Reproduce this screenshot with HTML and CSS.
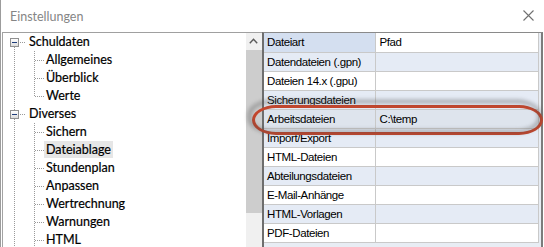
FILE: index.html
```html
<!DOCTYPE html>
<html lang="de">
<head>
<meta charset="utf-8">
<title>Einstellungen</title>
<link rel="stylesheet" href="styles.css">
</head>
<body>
<div class="window">
  <div class="titlebar">
    <span class="title">Einstellungen</span>
    <svg class="close" width="11" height="11" viewBox="0 0 11 11"><path d="M0.5 0.5 L10.5 10.5 M10.5 0.5 L0.5 10.5" stroke="#707070" stroke-width="1.1" fill="none"/></svg>
  </div>
  <div class="content">
    <div class="treepanel">
      <ul class="tree">
        <li class="node">
          <div class="node-row"><span class="toggle"></span><span class="hdots"></span><span class="label">Schuldaten</span></div>
          <ul class="children">
            <li class="leaf"><span class="label">Allgemeines</span></li>
            <li class="leaf"><span class="label">Überblick</span></li>
            <li class="leaf"><span class="label">Werte</span></li>
          </ul>
        </li>
        <li class="node">
          <div class="node-row"><span class="toggle"></span><span class="hdots"></span><span class="label">Diverses</span></div>
          <ul class="children open">
            <li class="leaf"><span class="label">Sichern</span></li>
            <li class="leaf"><span class="label selected">Dateiablage</span></li>
            <li class="leaf"><span class="label">Stundenplan</span></li>
            <li class="leaf"><span class="label">Anpassen</span></li>
            <li class="leaf"><span class="label">Wertrechnung</span></li>
            <li class="leaf"><span class="label">Warnungen</span></li>
            <li class="leaf"><span class="label">HTML</span></li>
          </ul>
        </li>
      </ul>
      <div class="scrollbar">
        <div class="sb-btn"><svg width="9" height="6" viewBox="0 0 9 6"><path d="M0.8 5.2 L4.5 1.3 L8.2 5.2" stroke="#5a5a5a" stroke-width="1.4" fill="none"/></svg></div>
        <div class="sb-thumb"></div>
        <div class="sb-track"></div>
      </div>
    </div>
    <div class="gridpanel">
      <table class="grid">
        <tr class="head"><td class="c1">Dateiart</td><td class="c2">Pfad</td></tr>
        <tr class="alt"><td class="c1">Datendateien (.gpn)</td><td class="c2"></td></tr>
        <tr><td class="c1">Dateien 14.x (.gpu)</td><td class="c2"></td></tr>
        <tr class="alt"><td class="c1">Sicherungsdateien</td><td class="c2"></td></tr>
        <tr class="hl"><td class="c1">Arbeitsdateien</td><td class="c2">C:\temp</td></tr>
        <tr class="alt"><td class="c1">Import/Export</td><td class="c2"></td></tr>
        <tr><td class="c1">HTML-Dateien</td><td class="c2"></td></tr>
        <tr class="alt"><td class="c1">Abteilungsdateien</td><td class="c2"></td></tr>
        <tr><td class="c1">E-Mail-Anhänge</td><td class="c2"></td></tr>
        <tr class="alt"><td class="c1">HTML-Vorlagen</td><td class="c2"></td></tr>
        <tr><td class="c1">PDF-Dateien</td><td class="c2"></td></tr>
      </table>
    </div>
  </div>
  <div class="mark"></div>
</div>
</body>
</html>
```
FILE: styles.css
```css
* { box-sizing: border-box; }
html, body { margin: 0; padding: 0; background: #ffffff; overflow: hidden; }
ul { list-style: none; margin: 0; padding: 0; }

.window {
  position: relative;
  width: 544px;
  height: 247px;
  border-left: 1px solid #9c9c9c;
  background: #ffffff;
  overflow: hidden;
}

.titlebar {
  height: 32px;
  display: flex;
  justify-content: space-between;
  align-items: flex-start;
  padding: 8px 10px 0 9px;
}
.title {
  font-family: Lato, "Open Sans", sans-serif;
  font-size: 12.5px;
  line-height: 18px;
  color: #858585;
}
.close { margin-top: 2px; margin-right: 0; }

.content {
  display: flex;
  height: 215px;
  padding-left: 1px;
}

.treepanel {
  display: flex;
  width: 260px;
  border-left: 1px solid #a3a3a3;
  border-top: 1px solid #a0a0a0;
}

.tree {
  flex: 1;
  height: 214px;
  overflow: hidden;
  font-family: Lato, "Open Sans", sans-serif;
  font-size: 12.5px;
  color: #000;
  -webkit-text-stroke: 0.2px #000;
  background: repeating-linear-gradient(to bottom, #9a9a9a 0 1px, transparent 1px 2px) 11px 14px / 1px 100% no-repeat;
}

.node-row {
  height: 18px;
  display: flex;
  align-items: center;
  padding-left: 7px;
}
.toggle {
  width: 9px;
  height: 9px;
  border: 1px solid #909090;
  background:
    linear-gradient(#1f3d7a, #1f3d7a) center / 5px 1px no-repeat,
    linear-gradient(#ffffff, #dcdcdc);
  margin-top: 1px;
}
.hdots {
  width: 6px;
  height: 1px;
  margin-left: 1px;
  margin-top: 1px;
  background: repeating-linear-gradient(to right, #9a9a9a 0 1px, transparent 1px 2px);
}
.node-row .label { margin-left: 3px; line-height: 18px; }

.leaf {
  height: 18px;
  line-height: 18px;
  padding-left: 41px;
  background:
    repeating-linear-gradient(to right, #9a9a9a 0 1px, transparent 1px 2px) 32px 9px / 9px 1px no-repeat,
    repeating-linear-gradient(to bottom, #9a9a9a 0 1px, transparent 1px 2px) 31px 0 / 1px 18px no-repeat;
}
.children:not(.open) .leaf:last-child {
  background:
    repeating-linear-gradient(to right, #9a9a9a 0 1px, transparent 1px 2px) 32px 9px / 9px 1px no-repeat,
    repeating-linear-gradient(to bottom, #9a9a9a 0 1px, transparent 1px 2px) 31px 0 / 1px 10px no-repeat;
}
.leaf .label {
  display: inline-block;
  height: 17px;
  line-height: 18px;
  padding: 0 2px;
}
.leaf .label.selected { background: #e6e6e6; }

.scrollbar {
  width: 16px;
  display: flex;
  flex-direction: column;
  background: #f0f0f0;
}
.sb-btn {
  height: 17px;
  display: flex;
  justify-content: center;
  align-items: flex-start;
  padding-top: 5px;
  padding-right: 1px;
}
.sb-thumb { height: 163px; background: #cdcdcd; }
.sb-track { flex: 1; }

.gridpanel {
  width: 281px;
  height: 215px;
  border-left: 2px solid #6e6e6e;
  border-right: 2px solid #7c7c7c;
  border-top: 1px solid #8a8a8a;
  background: #e8edf4;
  padding-right: 3px;
}

.grid {
  border-collapse: collapse;
  border-spacing: 0;
  width: 274px;
  table-layout: fixed;
  font-family: "Liberation Sans", Arial, sans-serif;
  font-size: 11.5px;
  letter-spacing: -0.4px;
  color: #000;
}
.grid td {
  height: 19px;
  padding: 0 0 0 3px;
  line-height: 18px;
  border-bottom: 1px solid #c9c9c9;
  border-right: 1px solid #c9c9c9;
  background: #ffffff;
  white-space: nowrap;
  overflow: hidden;
  vertical-align: top;
}
.grid td.c1 { width: 111px; }
.grid td.c2 { width: 163px; padding-left: 4px; }
.grid tr.head td.c1 { background: #d4dff0; }
.grid tr.alt td { background: #e5ebf5; }
.grid tr.hl td { background: #dee4ed; }

.mark {
  position: absolute;
  left: 251px;
  top: 105px;
  width: 291px;
  height: 30px;
  border: 3px solid #c4472e;
  border-radius: 24px / 15px;
}
.mark::before {
  content: "";
  position: absolute;
  left: -7px;
  top: -8px;
  right: -1px;
  bottom: -1px;
  border: 3px solid rgba(70, 70, 70, 0.5);
  border-radius: 24px / 15px;
  filter: blur(2px);
}
```
